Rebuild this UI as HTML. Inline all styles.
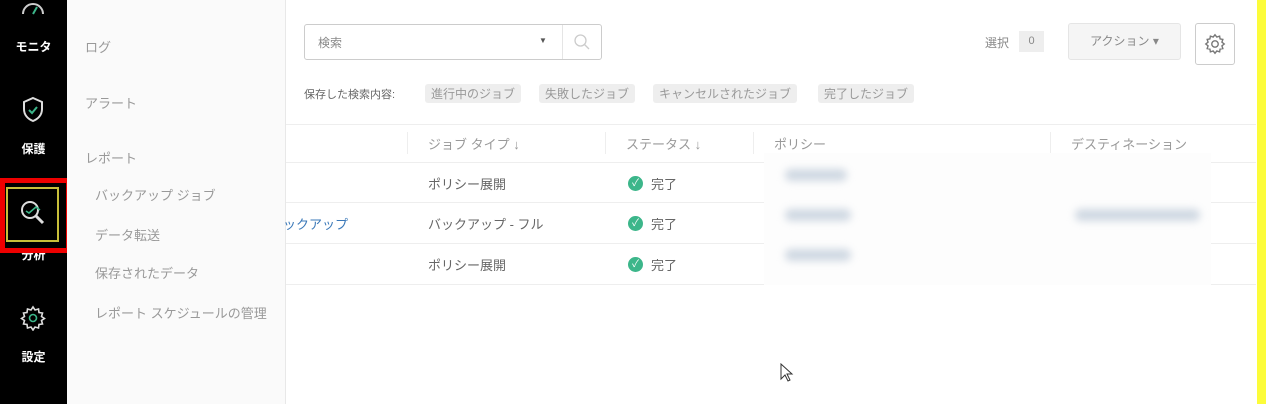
<!DOCTYPE html><html><head><meta charset="utf-8"><style>
*{margin:0;padding:0;box-sizing:border-box}
body{width:1266px;height:404px;overflow:hidden;background:#fff;font-family:"Liberation Sans","Noto Sans CJK JP",sans-serif;position:relative;color:#555}
.a{position:absolute;white-space:nowrap}
.nav{left:0;top:0;width:67px;height:404px;background:#000}
.nl{color:#fff;font-weight:bold;font-size:12px;width:67px;text-align:center}
.sub{left:67px;top:0;width:219px;height:404px;background:#fafafa;border-right:1px solid #e8e8e8}
.st{color:#999;font-size:13px}
.tag{background:#eee;border-radius:3px;font-size:12px;color:#999;padding:1px 6px;top:84px}
.h{top:134px;font-size:13px;color:#999}
.c{font-size:13px;color:#666}
.line{height:1px;background:#eee;left:286px;width:970px}
.ok{width:15px;height:15px;border-radius:50%;background:#3cb68a;color:#fff;font-size:10px;text-align:center;line-height:15px}
.blur{background:#cfd8e2;filter:blur(4px);border-radius:6px;height:12px}
</style></head><body>
<div class="a nav"></div>
<svg class="a" style="left:20px;top:0" width="26" height="16" viewBox="0 0 26 16"><path d="M3 14A10 10 0 0 1 23 14" fill="none" stroke="#ccc" stroke-width="2"/><path d="M13 14L17 7" stroke="#3cb68a" stroke-width="2"/></svg>
<div class="a nl" style="top:38px">モニタ</div>
<svg class="a" style="left:21px;top:96px" width="24" height="28" viewBox="0 0 24 28"><path d="M12 2L21 6V13C21 19 17 23 12 25C7 23 3 19 3 13V6Z" fill="none" stroke="#ddd" stroke-width="2"/><path d="M8 14L11 17L16 11" fill="none" stroke="#3cb68a" stroke-width="2"/></svg>
<div class="a nl" style="top:140px">保護</div>
<div class="a nl" style="top:246px">分析</div>
<div class="a" style="left:0;top:178px;width:71px;height:75px;border:5px solid #e00;background:#000"></div>
<div class="a" style="left:6px;top:187px;width:53px;height:55px;border:2px solid #c8bf3a"></div>
<svg class="a" style="left:18px;top:198px" width="32" height="32" viewBox="0 0 32 32"><circle cx="12" cy="12" r="8" fill="none" stroke="#ddd" stroke-width="2"/><path d="M18 18L25 25" stroke="#ddd" stroke-width="3"/><path d="M8 13L11 15L18 9L22 12" fill="none" stroke="#3cb68a" stroke-width="1.6"/></svg>
<svg class="a" style="left:20px;top:305px" width="26" height="26" viewBox="0 0 26 26"><path d="M13 2l2 3 3.5-1 .5 3.5 3.5.5-1 3.5 3 2-3 2 1 3.5-3.5.5-.5 3.5-3.5-1-2 3-2-3-3.5 1-.5-3.5-3.5-.5 1-3.5-3-2 3-2-1-3.5 3.5-.5.5-3.5 3.5 1z" fill="none" stroke="#ddd" stroke-width="1.6"/><circle cx="13" cy="13" r="3.5" fill="none" stroke="#3cb68a" stroke-width="1.6"/></svg>
<div class="a nl" style="top:348px">設定</div>
<div class="a sub"></div>
<div class="a st" style="left:85px;top:37px">ログ</div>
<div class="a st" style="left:85px;top:93px">アラート</div>
<div class="a st" style="left:85px;top:148px">レポート</div>
<div class="a st" style="left:95px;top:185px">バックアップ ジョブ</div>
<div class="a st" style="left:95px;top:225px">データ転送</div>
<div class="a st" style="left:95px;top:263px">保存されたデータ</div>
<div class="a st" style="left:95px;top:303px">レポート スケジュールの管理</div>
<div class="a" style="left:304px;top:24px;width:298px;height:36px;border:1px solid #ccc;border-radius:3px"></div>
<div class="a" style="left:562px;top:25px;width:1px;height:34px;background:#e5e5e5"></div>
<div class="a" style="left:318px;top:34px;font-size:12px;color:#888">検索</div>
<div class="a" style="left:539px;top:36px;font-size:8px;color:#555">▼</div>
<svg class="a" style="left:573px;top:33px" width="18" height="18" viewBox="0 0 18 18"><circle cx="7.5" cy="7.5" r="5.5" fill="none" stroke="#ccc" stroke-width="1.3"/><path d="M11.5 11.5L16 16" stroke="#ccc" stroke-width="1.3"/></svg>
<div class="a" style="left:304px;top:86px;font-size:11px;color:#666">保存した検索内容:</div>
<div class="a tag" style="left:425px">進行中のジョブ</div>
<div class="a tag" style="left:539px">失敗したジョブ</div>
<div class="a tag" style="left:653px">キャンセルされたジョブ</div>
<div class="a tag" style="left:818px">完了したジョブ</div>
<div class="a" style="left:985px;top:34px;font-size:12px;color:#888">選択</div>
<div class="a" style="left:1019px;top:31px;width:25px;height:21px;background:#eee;font-size:11px;text-align:center;line-height:21px;color:#888">0</div>
<div class="a" style="left:1068px;top:23px;width:113px;height:37px;background:#f5f5f5;border:1px solid #e5e5e5;border-radius:3px;font-size:12px;color:#888;text-align:center;line-height:35px">アクション ▾</div>
<div class="a" style="left:1195px;top:23px;width:40px;height:42px;border:1px solid #ccc;border-radius:3px"></div>
<svg class="a" style="left:1203px;top:32px" width="24" height="24" viewBox="0 0 26 26"><path d="M13 3l2 2.5 3-1 .5 3 3 .5-1 3 2.5 2-2.5 2 1 3-3 .5-.5 3-3-1-2 2.5-2-2.5-3 1-.5-3-3-.5 1-3-2.5-2 2.5-2-1-3 3-.5.5-3 3 1z" fill="none" stroke="#777" stroke-width="1.5"/><circle cx="13" cy="13" r="3.5" fill="none" stroke="#777" stroke-width="1.5"/></svg>
<div class="line a" style="top:124px"></div>
<div class="line a" style="top:162px"></div>
<div class="line a" style="top:202px"></div>
<div class="line a" style="top:243px"></div>
<div class="line a" style="top:284px"></div>
<div class="a" style="left:407px;top:132px;width:1px;height:22px;background:#eee"></div>
<div class="a" style="left:605px;top:132px;width:1px;height:22px;background:#eee"></div>
<div class="a" style="left:753px;top:132px;width:1px;height:22px;background:#eee"></div>
<div class="a" style="left:1050px;top:132px;width:1px;height:22px;background:#eee"></div>
<div class="a h" style="left:428px">ジョブ タイプ ↓</div>
<div class="a h" style="left:626px">ステータス ↓</div>
<div class="a h" style="left:774px">ポリシー</div>
<div class="a h" style="left:1071px">デスティネーション</div>
<div class="a" style="left:764px;top:153px;width:447px;height:132px;background:#fdfdfd"></div>
<div class="a c" style="left:428px;top:174px">ポリシー展開</div>
<div class="a c" style="left:428px;top:214px">バックアップ - フル</div>
<div class="a c" style="left:428px;top:255px">ポリシー展開</div>
<div class="a" style="left:283px;top:214px;font-size:13px;color:#3a78b8">ックアップ</div>
<div class="a ok" style="left:628px;top:176px">✓</div><div class="a c" style="left:651px;top:174px">完了</div>
<div class="a ok" style="left:628px;top:216px">✓</div><div class="a c" style="left:651px;top:214px">完了</div>
<div class="a ok" style="left:628px;top:257px">✓</div><div class="a c" style="left:651px;top:255px">完了</div>
<div class="a blur" style="left:785px;top:169px;width:62px"></div>
<div class="a blur" style="left:785px;top:209px;width:66px"></div>
<div class="a blur" style="left:785px;top:249px;width:66px"></div>
<div class="a blur" style="left:1075px;top:209px;width:125px"></div>
<div class="a" style="left:1257px;top:0;width:9px;height:404px;background:#fcfc3a"></div>
<svg class="a" style="left:780px;top:363px" width="14" height="20" viewBox="0 0 14 20"><path d="M1 1V16L5 12L8 18L10 17L7 11H12Z" fill="#fff" stroke="#333"/></svg>
</body></html>
